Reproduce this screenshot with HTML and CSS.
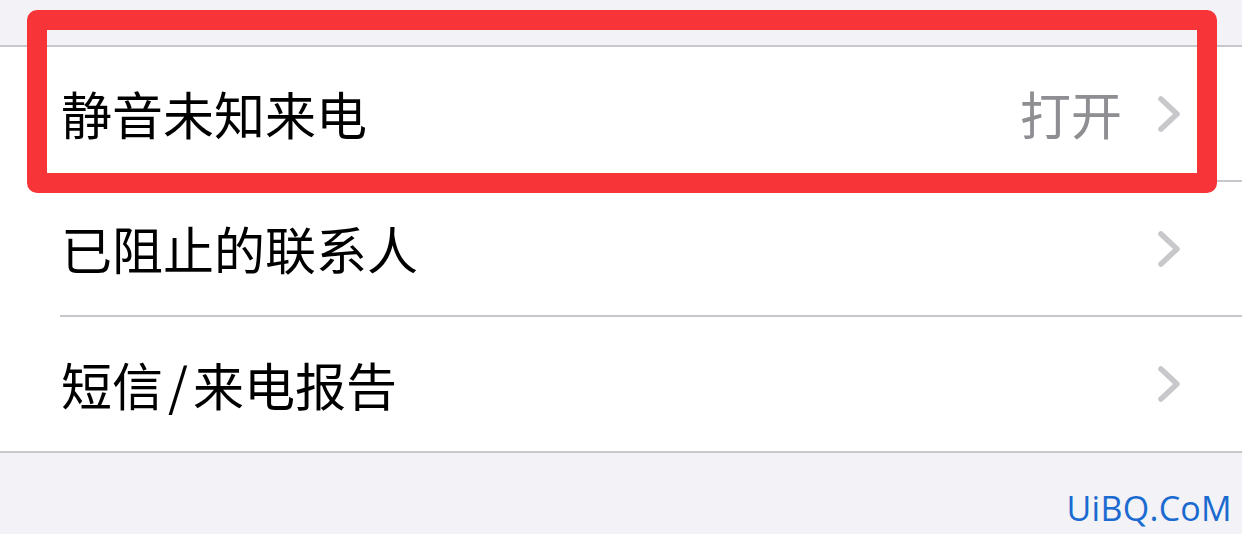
FILE: index.html
```html
<!DOCTYPE html>
<html lang="zh-CN">
<head>
<meta charset="utf-8">
<title>设置</title>
<link rel="stylesheet" href="styles.css">
</head>
<body>
<div class="page">
  <div class="top-space"></div>
  <div class="group">
    <div class="row">
      <span class="label">静音未知来电</span>
      <span class="value">打开</span>
      <svg class="chev" viewBox="0 0 22 36" width="22" height="36"><polyline points="3,3 19,18 3,33" fill="none" stroke="#c7c7cc" stroke-width="5.5" stroke-linecap="round" stroke-linejoin="round"/></svg>
    </div>
    <div class="row">
      <span class="label">已阻止的联系人</span>
      <svg class="chev" viewBox="0 0 22 36" width="22" height="36"><polyline points="3,3 19,18 3,33" fill="none" stroke="#c7c7cc" stroke-width="5.5" stroke-linecap="round" stroke-linejoin="round"/></svg>
    </div>
    <div class="row">
      <span class="label">短信<span class="slash">/</span>来电报告</span>
      <svg class="chev" viewBox="0 0 22 36" width="22" height="36"><polyline points="3,3 19,18 3,33" fill="none" stroke="#c7c7cc" stroke-width="5.5" stroke-linecap="round" stroke-linejoin="round"/></svg>
    </div>
  </div>
  <div class="footer"><span class="mark">UiBQ.CoM</span></div>
  <div class="highlight"></div>
</div>
</body>
</html>
```
FILE: styles.css
```css
html, body {
  margin: 0;
  padding: 0;
}
body {
  background: #f2f2f7;
  font-family: "Noto Sans CJK SC", "Noto Sans", sans-serif;
  width: 1242px;
  height: 534px;
  overflow: hidden;
}
.page {
  position: relative;
  width: 1242px;
  height: 534px;
}
.top-space {
  height: 45px;
}
.group {
  background: #ffffff;
  border-top: 2px solid #c8c7cc;
  border-bottom: 2px solid #c8c7cc;
}
.row {
  display: flex;
  align-items: center;
  height: 133px;
  margin-left: 60px;
  padding-left: 1px;
  padding-right: 62px;
  border-bottom: 2px solid #c8c7cc;
}
.row:last-child {
  border-bottom: none;
  height: 134px;
}
.label {
  flex: 1;
  font-size: 51px;
  color: #000000;
  line-height: 1;
}
.slash {
  margin: 0 5px;
}
.value {
  font-size: 51px;
  color: #8e8e93;
  line-height: 1;
  margin-right: 36px;
}
.chev {
  display: block;
}
.footer {
  display: flex;
  justify-content: flex-end;
  padding-top: 38px;
  padding-right: 10px;
}
.mark {
  font-family: "Open Sans", "DejaVu Sans", sans-serif;
  font-size: 34px;
  color: #1a6ad0;
  line-height: 1;
  letter-spacing: 0.3px;
}
.highlight {
  position: absolute;
  left: 27px;
  top: 10px;
  width: 1150px;
  height: 143px;
  border: 20px solid #f73539;
  border-radius: 10px;
}
```
